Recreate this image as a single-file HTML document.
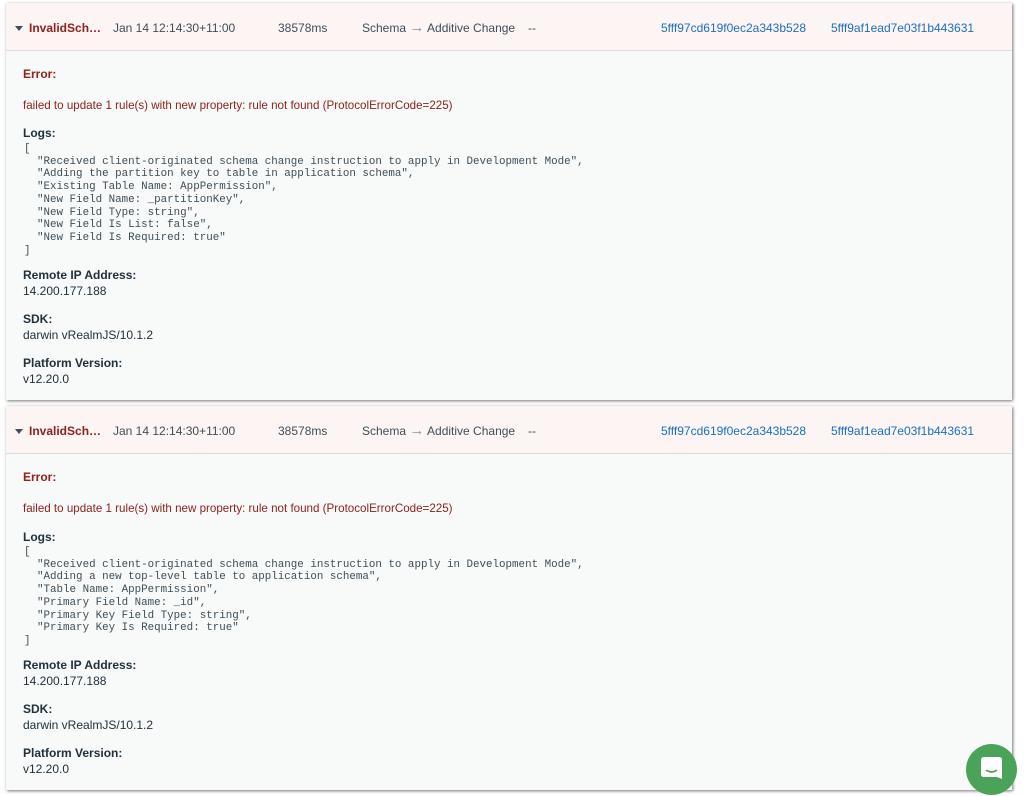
<!DOCTYPE html>
<html><head><meta charset="utf-8"><style>
*{margin:0;padding:0;box-sizing:border-box}
body{width:1024px;height:796px;background:#fff;font-family:"Liberation Sans",sans-serif;position:relative;overflow:hidden}
.card{position:absolute;left:6px;width:1006px;background:#f8f9f9;box-shadow:1px 1px 3px rgba(0,0,0,.55)}
.hd{position:absolute;left:0;top:0;width:100%;height:48px;background:#fdf4f4;border-bottom:1px solid #dcdcdc;font-size:12px;color:#3d4f58}
.hd span{position:absolute;top:18px;white-space:nowrap}
.t{position:absolute;left:17px;font-size:12px;white-space:nowrap}
.lab{font-weight:bold;color:#21313c}
.red{color:#8f221b}
.val{color:#21313c}
pre{position:absolute;left:18px;font-family:"Liberation Mono",monospace;font-size:10.85px;line-height:12.7px;color:#3d4f58}
.tri{position:absolute;left:9px;top:23px;width:0;height:0;border-left:4px solid transparent;border-right:4px solid transparent;border-top:5px solid #3d4f58}
a{color:#1a6fc4;text-decoration:none}
.ar{position:static!important;color:#8a959b;font-size:15px;line-height:10px}
</style></head><body>

<div class="card" style="top:3px;height:397px">
 <div class="hd">
  <div class="tri"></div>
  <span style="left:23px;color:#8f221b;font-weight:bold">InvalidSch…</span>
  <span style="left:107px">Jan 14 12:14:30+11:00</span>
  <span style="left:272px">38578ms</span>
  <span style="left:356px">Schema <span class="ar">→</span> Additive Change</span>
  <span style="left:522px">--</span>
  <span style="left:655px"><a>5fff97cd619f0ec2a343b528</a></span>
  <span style="left:825px"><a>5fff9af1ead7e03f1b443631</a></span>
 </div>
 <div class="t lab red" style="top:64px">Error:</div>
 <div class="t red" style="top:96px;font-size:11.6px">failed to update 1 rule(s) with new property: rule not found (ProtocolErrorCode=225)</div>
 <div class="t lab" style="top:123px">Logs:</div>
<pre style="top:140px">[
  "Received client-originated schema change instruction to apply in Development Mode",
  "Adding the partition key to table in application schema",
  "Existing Table Name: AppPermission",
  "New Field Name: _partitionKey",
  "New Field Type: string",
  "New Field Is List: false",
  "New Field Is Required: true"
]</pre>
 <div class="t lab" style="top:265px">Remote IP Address:</div>
 <div class="t val" style="top:281px">14.200.177.188</div>
 <div class="t lab" style="top:309px">SDK:</div>
 <div class="t val" style="top:325px">darwin vRealmJS/10.1.2</div>
 <div class="t lab" style="top:353px">Platform Version:</div>
 <div class="t val" style="top:369px">v12.20.0</div>
</div>

<div class="card" style="top:406px;height:384px">
 <div class="hd">
  <div class="tri"></div>
  <span style="left:23px;color:#8f221b;font-weight:bold">InvalidSch…</span>
  <span style="left:107px">Jan 14 12:14:30+11:00</span>
  <span style="left:272px">38578ms</span>
  <span style="left:356px">Schema <span class="ar">→</span> Additive Change</span>
  <span style="left:522px">--</span>
  <span style="left:655px"><a>5fff97cd619f0ec2a343b528</a></span>
  <span style="left:825px"><a>5fff9af1ead7e03f1b443631</a></span>
 </div>
 <div class="t lab red" style="top:64px">Error:</div>
 <div class="t red" style="top:96px;font-size:11.6px">failed to update 1 rule(s) with new property: rule not found (ProtocolErrorCode=225)</div>
 <div class="t lab" style="top:124px">Logs:</div>
<pre style="top:140px">[
  "Received client-originated schema change instruction to apply in Development Mode",
  "Adding a new top-level table to application schema",
  "Table Name: AppPermission",
  "Primary Field Name: _id",
  "Primary Key Field Type: string",
  "Primary Key Is Required: true"
]</pre>
 <div class="t lab" style="top:252px">Remote IP Address:</div>
 <div class="t val" style="top:268px">14.200.177.188</div>
 <div class="t lab" style="top:296px">SDK:</div>
 <div class="t val" style="top:312px">darwin vRealmJS/10.1.2</div>
 <div class="t lab" style="top:340px">Platform Version:</div>
 <div class="t val" style="top:356px">v12.20.0</div>
</div>

<div style="position:absolute;left:966px;top:744px;width:51px;height:51px;border-radius:50%;background:#4ba259">
 <svg width="51" height="51" viewBox="0 0 51 51" style="position:absolute;left:0;top:0">
  <path d="M15 16 q0-3 3-3 h15 q3 0 3 3 v19 l-5-2 h-13 q-3 0-3-3z" fill="#fff"/>
  <path d="M20 26 q5.5 4 11 0" stroke="#4ba259" stroke-width="1.6" fill="none"/>
 </svg>
</div>
</body></html>
